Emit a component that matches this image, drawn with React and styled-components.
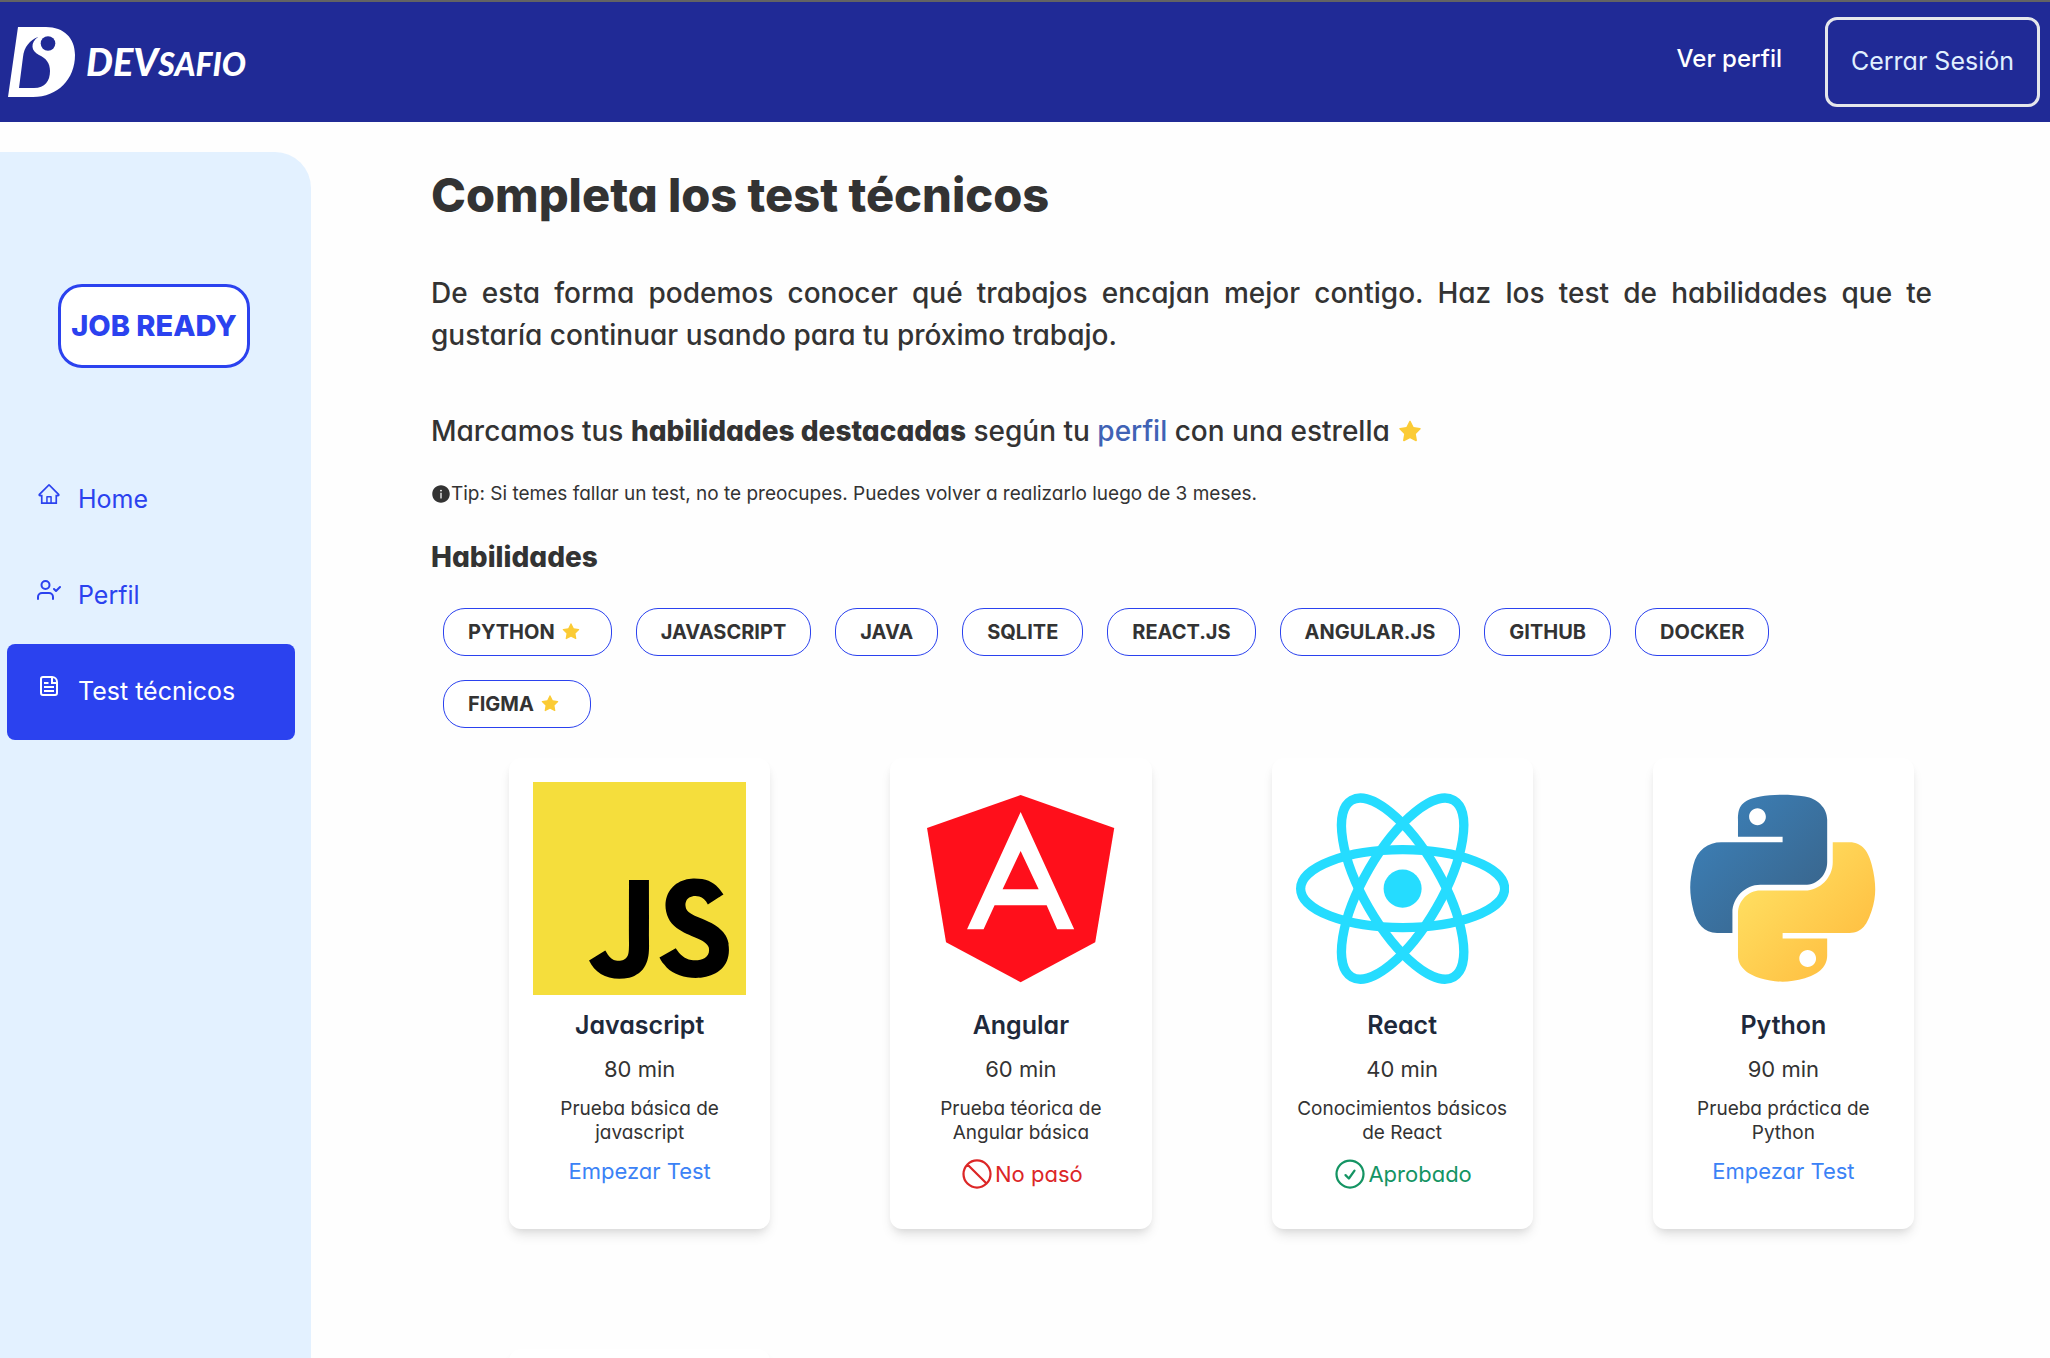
import React from "react";
import styled, { createGlobalStyle } from "styled-components";
import { AiFillInfoCircle, AiFillStar, AiOutlineHome } from "react-icons/ai";
import { FiUserCheck } from "react-icons/fi";
import { HiOutlineNoSymbol, HiOutlineCheckCircle } from "react-icons/hi2";
import { SiJavascript } from "react-icons/si";

const GlobalStyle = createGlobalStyle`
  *, *::before, *::after { box-sizing: border-box; }
  body {
    margin: 0;
    background: #fefefe;
    color: #333;
    font-family: Inter, "Open Sans", sans-serif;
    font-feature-settings: "cv11";
  }
  h1, h2, h3, p, ul { margin: 0; padding: 0; }
  ul { list-style: none; }
  a { text-decoration: none; }
  svg { display: block; flex: none; }
`;

const Page = styled.div`
  display: flex;
  flex-direction: column;
  height: 100vh;
  overflow: hidden;
`;

const Header = styled.header`
  display: flex;
  align-items: center;
  justify-content: space-between;
  flex: none;
  height: 122px;
  padding: 0 10px 0 8px;
  border-top: 2px solid #636363;
  background: #202a96;
`;

const Brand = styled.a`
  display: flex;
  align-items: center;
  gap: 11px;
  color: #fff;
`;

const BrandName = styled.span`
  font-family: Lato, sans-serif;
  font-size: 38px;
  font-style: italic;
  font-weight: 900;
  line-height: 48px;
`;

const BrandSuffix = styled.span`
  font-size: 32px;
`;

const HeaderNav = styled.nav`
  display: flex;
  align-items: center;
  gap: 43px;
`;

const ProfileLink = styled.a`
  padding-bottom: 8px;
  color: #fff;
  font-size: 24px;
  font-weight: 500;
`;

const LogoutButton = styled.button`
  height: 90px;
  padding: 0 23px 2px;
  border: 3px solid #e5e7eb;
  border-radius: 12px;
  background: transparent;
  color: #e0f0ff;
  font: inherit;
  font-size: 25px;
  font-feature-settings: inherit;
`;

const Body = styled.div`
  display: flex;
  flex: 1;
  min-height: 0;
`;

const Sidebar = styled.aside`
  display: flex;
  flex-direction: column;
  flex: none;
  width: 311px;
  margin-top: 30px;
  padding: 132px 3px 0 0;
  border-top-right-radius: 36px;
  background: #e3f1ff;
`;

const JobReady = styled.div`
  display: flex;
  align-items: center;
  justify-content: center;
  align-self: center;
  width: 192px;
  height: 84px;
  margin-bottom: 84px;
  padding-bottom: 2px;
  border: 3px solid #2b42ef;
  border-radius: 24px;
  background: #fff;
  color: #2b42ef;
  font-size: 29px;
  font-weight: 800;
`;

const SideNav = styled.nav`
  padding: 0 13px 0 7px;
`;

const SideLink = styled.a`
  display: flex;
  align-items: center;
  gap: 17px;
  height: 96px;
  padding: 0 0 2px 30px;
  border-radius: 8px;
  background: ${(p) => (p.$active ? "#2b42ef" : "transparent")};
  color: ${(p) => (p.$active ? "#fff" : "#2b42ef")};
  font-size: 25px;

  svg { margin-bottom: 10px; }
`;

const Main = styled.main`
  flex: 1;
  min-width: 0;
  padding: 43px 118px 0 120px;
`;

const Title = styled.h1`
  font-size: 47px;
  font-weight: 800;
  line-height: 60px;
`;

const Lead = styled.p`
  margin-top: ${(p) => p.$gap}px;
  font-size: 28px;
  font-weight: 500;
  line-height: 42px;
  text-align: justify;

  b { font-weight: 800; }
  svg { display: inline-block; vertical-align: -4px; }
`;

const InlineLink = styled.a`
  color: #4062b5;
`;

const Tip = styled.p`
  display: flex;
  align-items: center;
  margin-top: 28px;
  font-size: 19px;
  line-height: 28px;
`;

const SectionTitle = styled.h2`
  margin-top: 28px;
  font-size: 28px;
  font-weight: 800;
  line-height: 42px;
`;

const Chips = styled.ul`
  display: flex;
  flex-wrap: wrap;
  gap: 24px;
  margin: 30px 12px;
`;

const Chip = styled.li`
  display: flex;
  align-items: center;
  gap: 6px;
  height: 48px;
  padding: 0 ${(p) => (p.$starred ? 30 : 24)}px 0 24px;
  border: 1px solid #2b42ef;
  border-radius: 22px;
  background: #fff;
  font-size: 20px;
  font-weight: 700;
`;

const Grid = styled.div`
  display: grid;
  grid-template-columns: repeat(4, 1fr);
  gap: 120px;
  margin: 0 18px 0 78px;
`;

const Card = styled.article`
  display: flex;
  flex-direction: column;
  align-items: center;
  min-height: 471px;
  padding: 24px;
  border-radius: 12px;
  background: #fff;
  box-shadow: 0 8px 12px -2px rgba(0, 0, 0, 0.1), 0 4px 8px -4px rgba(0, 0, 0, 0.1);
  text-align: center;
`;

const Artwork = styled.div`
  width: 100%;
  aspect-ratio: 1;

  svg { width: 100%; height: 100%; }
`;

const CardTitle = styled.h3`
  margin-top: 12px;
  color: #1e293b;
  font-size: 25px;
  font-weight: 600;
  line-height: 36px;
`;

const Duration = styled.p`
  margin-top: 10px;
  font-size: 22px;
  line-height: 32px;
`;

const Description = styled.p`
  margin-top: 12px;
  font-size: 19px;
  line-height: 24px;
`;

const StartLink = styled.a`
  margin-top: 10px;
  color: #3b82f6;
  font-size: 22px;
  line-height: 32px;
`;

const Status = styled.p`
  display: flex;
  align-items: center;
  margin-top: 11px;
  color: ${(p) => (p.$passed ? "#149463" : "#dc2626")};
  font-size: 22px;
`;

const BrandMark = () => (
  <svg width="67" height="70" viewBox="0 0 67 70" aria-hidden="true">
    <path
      fill="#fff"
      fillRule="evenodd"
      d="M10 0H38C56 0 67 11 67 28C67 52 50 70 25 70H0ZM30 10C22 13 16 20 15 30L11 61H26C37 61 42 54 42 44C42 36 38 31 31 28C23 24 22 16 30 10Z"
    />
    <circle cx="40" cy="16.5" r="7.3" fill="#202a96" />
  </svg>
);

const DocumentIcon = () => (
  <svg width="24" height="24" viewBox="0 0 24 24" fill="none" stroke="currentColor" strokeWidth="2" aria-hidden="true">
    <path d="M14.5 3H6a2 2 0 0 0-2 2v14a2 2 0 0 0 2 2h12a2 2 0 0 0 2-2V8a5 5 0 0 0-5-5v6h5M7 9h4.500M7 13h10M7 17h10" />
  </svg>
);

const AngularLogo = () => (
  <svg viewBox="0 0 213 213" aria-hidden="true">
    <path fill="#ff0f1b" d="M106.500 13L200 46 181 160 106.500 200 32 160 13 46Z" />
    <path
      fill="#fff"
      fillRule="evenodd"
      d="M106.500 30L160 147H143L132.500 123H80.500L69.500 147H53ZM106.500 69L88.500 107H124.500Z"
    />
  </svg>
);

const ReactLogo = () => (
  <svg viewBox="-11.5 -11.5 23 23" aria-hidden="true">
    <circle r="2.050" fill="#25dcff" />
    <g fill="none" stroke="#25dcff">
      <ellipse rx="11" ry="4.200" />
      <ellipse rx="11" ry="4.200" transform="rotate(60)" />
      <ellipse rx="11" ry="4.200" transform="rotate(120)" />
    </g>
  </svg>
);

const PythonLogo = () => (
  <svg viewBox="5.500 -5 118 118" aria-hidden="true">
    <defs>
      <linearGradient id="pyBlue" x1="0" y1="0" x2="1" y2="1">
        <stop offset="0.1" stopColor="#3c80b8" />
        <stop offset="0.9" stopColor="#39648a" />
      </linearGradient>
      <linearGradient id="pyYellow" x1="0" y1="0" x2="1" y2="1">
        <stop offset="0.15" stopColor="#ffe062" />
        <stop offset="0.75" stopColor="#ffc345" />
      </linearGradient>
    </defs>
    <path
      fill="url(#pyBlue)"
      d="M63.391 1.988c-4.222.02-8.252.379-11.8 1.007-10.45 1.846-12.346 5.71-12.346 12.837v9.411h24.693v3.137H29.977c-7.176 0-13.46 4.313-15.426 12.521-2.268 9.405-2.368 15.275 0 25.096 1.755 7.311 5.947 12.519 13.124 12.519h8.491V67.234c0-8.151 7.051-15.34 15.426-15.34h24.665c6.866 0 12.346-5.654 12.346-12.548V15.833c0-6.693-5.646-11.72-12.346-12.837-4.244-.706-8.645-1.027-12.866-1.008zM50.037 9.557c2.55 0 4.634 2.117 4.634 4.721 0 2.593-2.083 4.69-4.634 4.69-2.56 0-4.633-2.097-4.633-4.69-.001-2.604 2.073-4.721 4.633-4.721z"
    />
    <path
      fill="url(#pyYellow)"
      d="M91.682 28.38v10.966c0 8.5-7.208 15.655-15.426 15.655H51.591c-6.756 0-12.346 5.783-12.346 12.549v23.515c0 6.691 5.818 10.628 12.346 12.547 7.816 2.297 15.312 2.713 24.665 0 6.216-1.801 12.346-5.423 12.346-12.547v-9.412H63.938v-3.138h37.012c7.176 0 9.852-5.005 12.348-12.519 2.578-7.735 2.467-15.174 0-25.096-1.774-7.145-5.161-12.521-12.348-12.521h-9.268zM77.809 87.927c2.561 0 4.634 2.097 4.634 4.692 0 2.602-2.074 4.719-4.634 4.719-2.55 0-4.633-2.117-4.633-4.719 0-2.595 2.083-4.692 4.633-4.692z"
    />
  </svg>
);

const JavascriptLogo = styled(SiJavascript)`
  background: #000;
  color: #f5de3c;
`;

const skills = [
  { name: "PYTHON", starred: true },
  { name: "JAVASCRIPT" },
  { name: "JAVA" },
  { name: "SQLITE" },
  { name: "REACT.JS" },
  { name: "ANGULAR.JS" },
  { name: "GITHUB" },
  { name: "DOCKER" },
  { name: "FIGMA", starred: true },
];

const tests = [
  { title: "Javascript", minutes: 80, text: "Prueba básica de javascript", Logo: JavascriptLogo },
  { title: "Angular", minutes: 60, text: "Prueba téorica de Angular básica", Logo: AngularLogo, status: "failed" },
  { title: "React", minutes: 40, text: "Conocimientos básicos de React", Logo: ReactLogo, status: "passed" },
  { title: "Python", minutes: 90, text: "Prueba práctica de Python", Logo: PythonLogo },
];

const Outcome = ({ status }) => {
  if (status === "failed") {
    return <Status><HiOutlineNoSymbol size={36} />No pasó</Status>;
  }
  if (status === "passed") {
    return <Status $passed><HiOutlineCheckCircle size={36} />Aprobado</Status>;
  }
  return <StartLink href="#">Empezar Test</StartLink>;
};

export default function App() {
  return (
    <Page>
      <GlobalStyle />
      <Header>
        <Brand href="#">
          <BrandMark />
          <BrandName>DEV<BrandSuffix>SAFIO</BrandSuffix></BrandName>
        </Brand>
        <HeaderNav>
          <ProfileLink href="#">Ver perfil</ProfileLink>
          <LogoutButton type="button">Cerrar Sesión</LogoutButton>
        </HeaderNav>
      </Header>
      <Body>
        <Sidebar>
          <JobReady>JOB READY</JobReady>
          <SideNav>
            <SideLink href="#"><AiOutlineHome size={24} />Home</SideLink>
            <SideLink href="#"><FiUserCheck size={24} />Perfil</SideLink>
            <SideLink href="#" $active><DocumentIcon />Test técnicos</SideLink>
          </SideNav>
        </Sidebar>
        <Main>
          <Title>Completa los test técnicos</Title>
          <Lead $gap={47}>
            De esta forma podemos conocer qué trabajos encajan mejor contigo. Haz los test de
            habilidades que te gustaría continuar usando para tu próximo trabajo.
          </Lead>
          <Lead $gap={54}>
            Marcamos tus <b>habilidades destacadas</b> según tu{" "}
            <InlineLink href="#">perfil</InlineLink> con una estrella{" "}
            <AiFillStar size={26} color="#fbcb35" />
          </Lead>
          <Tip>
            <AiFillInfoCircle size={20} />
            Tip: Si temes fallar un test, no te preocupes. Puedes volver a realizarlo luego de 3 meses.
          </Tip>
          <SectionTitle>Habilidades</SectionTitle>
          <Chips>
            {skills.map(({ name, starred }) => (
              <Chip key={name} $starred={starred}>
                {name}
                {starred && <AiFillStar size={20} color="#fbcb35" />}
              </Chip>
            ))}
          </Chips>
          <Grid>
            {tests.map(({ title, minutes, text, Logo, status }) => (
              <Card key={title}>
                <Artwork><Logo /></Artwork>
                <CardTitle>{title}</CardTitle>
                <Duration>{minutes} min</Duration>
                <Description>{text}</Description>
                <Outcome status={status} />
              </Card>
            ))}
            <Card />
          </Grid>
        </Main>
      </Body>
    </Page>
  );
}
